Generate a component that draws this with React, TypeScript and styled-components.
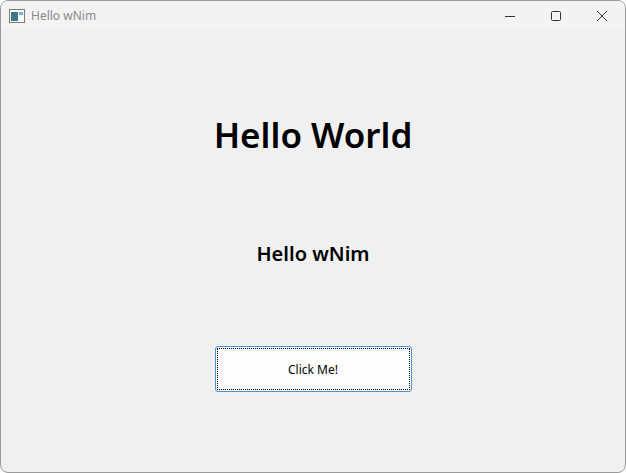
import React from "react";
import styled, { createGlobalStyle } from "styled-components";

const Global = createGlobalStyle`
  html, body { margin: 0; padding: 0; background: #fff; }
  body { font-family: "Noto Sans", "Open Sans", sans-serif; }
`;

const Window = styled.div`
  width: 626px; height: 473px; box-sizing: border-box;
  border: 1px solid #9a9a9a; border-radius: 8px; overflow: hidden;
  background: #f0f0f0; display: flex; flex-direction: column;
`;
const TitleBar = styled.div`
  height: 29px; display: flex; align-items: center; background: #f3f3f3;
  padding-left: 8px;
`;
const Title = styled.span`
  font-size: 12px; color: #8a8a8a; margin-left: 6px; flex: 1;
  font-family: "Noto Sans", sans-serif;
`;
const Ctrl = styled.div`
  width: 46px; height: 29px; display: flex; align-items: center; justify-content: center;
`;
const Content = styled.div`
  flex: 1; display: flex; flex-direction: column; align-items: center;
`;
const Big = styled.div`
  margin-top: 80px; font-size: 35px; font-weight: 600; color: #000; line-height: 50px;
`;
const Mid = styled.div`
  margin-top: 80px; font-size: 20px; font-weight: 600; color: #000; line-height: 28px;
`;
const Button = styled.button`
  margin-top: 78px; width: 197px; height: 46px; background: #fdfdfd;
  border: 1px solid #4a90d9; border-radius: 3px; font-size: 12px; color: #000;
  font-family: "Noto Sans", sans-serif; padding: 1px; box-sizing: border-box;
  display: flex; align-items: center; justify-content: center;
`;
const Focus = styled.span`
  flex: 1; align-self: stretch; border: 1px dotted #000;
  display: flex; align-items: center; justify-content: center;
`;

export default function App() {
  return (
    <>
      <Global />
      <Window>
        <TitleBar>
          <svg width="16" height="14" viewBox="0 0 16 14">
            <rect x="0.5" y="0.5" width="15" height="13" fill="#fff" stroke="#7a7a7a" />
            <rect x="2" y="3" width="7" height="9" fill="#3a7a8a" />
            <rect x="10" y="3" width="4" height="3" fill="#7ab0d0" />
          </svg>
          <Title>Hello wNim</Title>
          <Ctrl>
            <svg width="12" height="12"><line x1="1" y1="6.5" x2="11" y2="6.5" stroke="#333" /></svg>
          </Ctrl>
          <Ctrl>
            <svg width="12" height="12"><rect x="1.5" y="1.5" width="9" height="9" rx="1" fill="none" stroke="#333" /></svg>
          </Ctrl>
          <Ctrl>
            <svg width="12" height="12"><path d="M1 1L11 11M11 1L1 11" stroke="#333" /></svg>
          </Ctrl>
        </TitleBar>
        <Content>
          <Big>Hello World</Big>
          <Mid>Hello wNim</Mid>
          <Button><Focus>Click Me!</Focus></Button>
        </Content>
      </Window>
    </>
  );
}
